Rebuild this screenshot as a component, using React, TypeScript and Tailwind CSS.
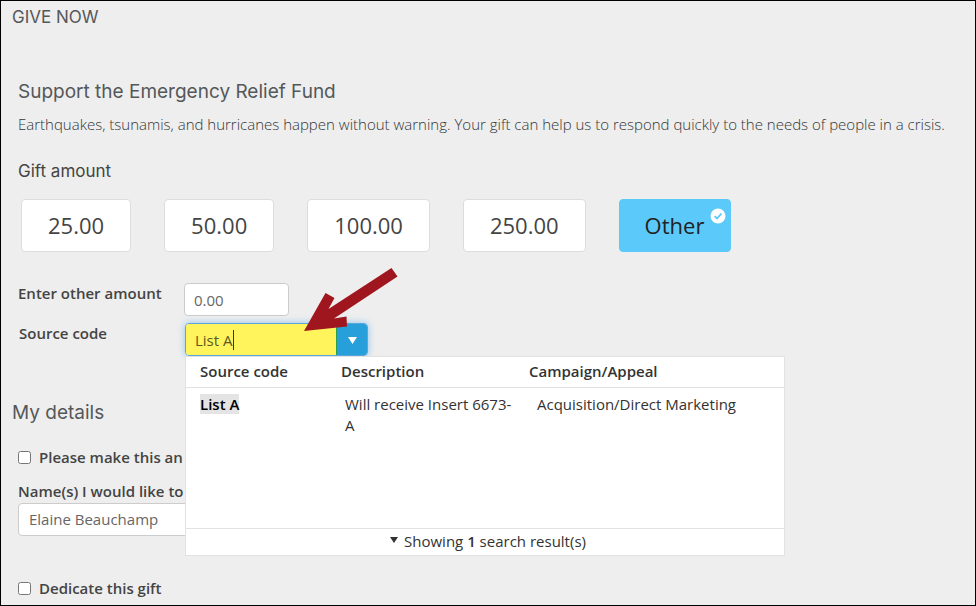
import * as React from "react";

const AMOUNTS = ["25.00", "50.00", "100.00", "250.00"];

const RESULTS = [
  { code: "List A", description: "Will receive Insert 6673-A", campaign: "Acquisition/Direct Marketing" },
];

const CheckBadge: React.FC = () => (
  <svg viewBox="0 0 16 16" className="absolute top-2 right-1 size-4" aria-hidden="true">
    <circle cx="8" cy="8" r="7.5" fill="#fff" />
    <path d="M4.6 8.2 7 10.5l4.4-4.8" fill="none" stroke="#5bc9f9" strokeWidth="1.8" />
  </svg>
);

const Arrow: React.FC = () => (
  <svg
    viewBox="0 0 96 66"
    className="pointer-events-none absolute -top-14 left-[118px] z-20 h-[66px] w-24"
    aria-hidden="true"
  >
    <path
      d="M1 64 22.500 26 31.500 31 25.500 42 88.500 1 94.500 9.500 31 51.500 43.500 49.500 44 59.500Z"
      fill="#a0161e"
    />
  </svg>
);

const SourceCodeResults: React.FC = () => (
  <div className="absolute top-full left-0 z-10 w-[600px] border border-[#e2e2e2] bg-white text-[#333]">
    <div className="h-[171px]">
      <table className="w-full table-fixed text-left text-[15px] leading-[21px]">
        <colgroup>
          <col className="w-[150px]" />
          <col className="w-[187px]" />
          <col />
        </colgroup>
        <thead>
          <tr className="border-b border-[#e2e2e2]">
            <th className="pt-1 pb-[5px] pl-3.5 font-semibold">Source code</th>
            <th className="pt-1 pb-[5px] pl-[5px] font-semibold">Description</th>
            <th className="pt-1 pb-[5px] pl-1.5 font-semibold">Campaign/Appeal</th>
          </tr>
        </thead>
        <tbody>
          {RESULTS.map((row) => (
            <tr key={row.code} className="align-top">
              <td className="pt-1.5 pl-3.5">
                <mark className="bg-[#e4e4e4] font-semibold text-black">{row.code}</mark>
              </td>
              <td className="pt-1.5 pr-2 pl-[9px]">{row.description}</td>
              <td className="pt-1.5 pl-3.5">{row.campaign}</td>
            </tr>
          ))}
        </tbody>
      </table>
    </div>
    <div className="flex h-[27px] items-center justify-center gap-1.5 border-t border-[#e2e2e2] pb-0.5 pl-1.5 text-[15px]">
      <svg viewBox="0 0 8 6" className="mb-0.5 h-1.5 w-2" aria-hidden="true">
        <path d="M0 0h8L4 6z" fill="#333" />
      </svg>
      <span>
        Showing <b className="font-semibold">1</b> search result(s)
      </span>
    </div>
  </div>
);

export default function App() {
  const [amount, setAmount] = React.useState("Other");

  return (
    <main className="min-h-screen border border-black bg-[#eee] pb-1.5 font-['Open_Sans',sans-serif] text-[15px] leading-5 text-[#444]">
      <h1 className="px-[11px] pt-1 font-[Inter,sans-serif] text-[17px] leading-6 text-[#54585a]">GIVE NOW</h1>

      <section className="px-[17px] pt-12">
        <h2 className="pt-px font-[Inter,sans-serif] text-[19px] leading-7 text-[#54585a]">
          Support the Emergency Relief Fund
        </h2>
        <p className="mt-2 font-light text-[#333638]">
          Earthquakes, tsunamis, and hurricanes happen without warning. Your gift can help us to respond quickly to
          the needs of people in a crisis.
        </p>

        <h3 className="mt-[25px] font-[Inter,sans-serif] text-[17px] leading-6">Gift amount</h3>
        <div className="mt-4 flex gap-[33px] px-[3px]">
          {AMOUNTS.map((value) => (
            <button
              key={value}
              type="button"
              onClick={() => setAmount(value)}
              className="h-[53px] rounded border border-[#ddd] bg-white px-[26px] pb-0.5 text-[22px]"
            >
              {value}
            </button>
          ))}
          <button
            type="button"
            onClick={() => setAmount("Other")}
            className="relative h-[53px] rounded border border-[#5bc9f9] bg-[#5bc9f9] pr-[26px] pb-0.5 pl-[25px] text-[22px] text-[#222]"
          >
            Other
            {amount === "Other" && <CheckBadge />}
          </button>
        </div>

        <div className="mt-[31px] flex">
          <label htmlFor="other-amount" className="w-[166px] font-semibold">
            Enter other amount
          </label>
          <input
            id="other-amount"
            defaultValue="0.00"
            className="h-[33px] w-[105px] rounded border border-[#ccc] bg-white px-[9px] text-[#666]"
          />
        </div>

        <div className="mt-[7px] flex">
          <label htmlFor="source-code" className="w-[167px] pl-px font-semibold">
            Source code
          </label>
          <div className="relative">
            <div className="flex h-[33px] w-[183px] overflow-hidden rounded border border-[#5aa5dc] shadow-[0_0_7px_rgba(82,168,236,0.6)]">
              <div className="flex flex-1 items-center border-r border-[#2aa052] bg-[#fff45c] px-[9px]">
                <input
                  id="source-code"
                  defaultValue="List A"
                  className="field-sizing-content bg-transparent text-[#5c5a20] outline-none"
                />
                <span className="h-5 w-px bg-[#333]" />
              </div>
              <button
                type="button"
                aria-label="Show source codes"
                className="flex w-[30px] items-center justify-center bg-[#269fdb] pt-0.5"
              >
                <svg viewBox="0 0 9 7" className="h-[7px] w-[9px]" aria-hidden="true">
                  <path d="M0 0h9L4.500 7z" fill="#fff" />
                </svg>
              </button>
            </div>
            <Arrow />
            <SourceCodeResults />
          </div>
        </div>
      </section>

      <section className="px-[17px] pt-[45px]">
        <h2 className="-ml-1.5 font-[Inter,sans-serif] text-[19px] leading-6 text-[#54585a]">My details</h2>
        <div className="mt-[22px] flex items-center gap-2">
          <input id="anonymous" type="checkbox" className="size-[13px]" />
          <label htmlFor="anonymous" className="font-semibold">
            Please make this an
          </label>
        </div>
        <div className="mt-3.5">
          <label htmlFor="names" className="block font-semibold">
            Name(s) I would like to
          </label>
          <input
            id="names"
            defaultValue="Elaine Beauchamp"
            className="mt-0.5 block h-[33px] w-[260px] rounded border border-[#ccc] bg-white px-2.5 pb-0.5 text-[#666]"
          />
        </div>
        <div className="mt-[42px] flex items-center gap-2">
          <input id="dedicate" type="checkbox" className="size-[13px]" />
          <label htmlFor="dedicate" className="font-semibold">
            Dedicate this gift
          </label>
        </div>
      </section>
    </main>
  );
}
